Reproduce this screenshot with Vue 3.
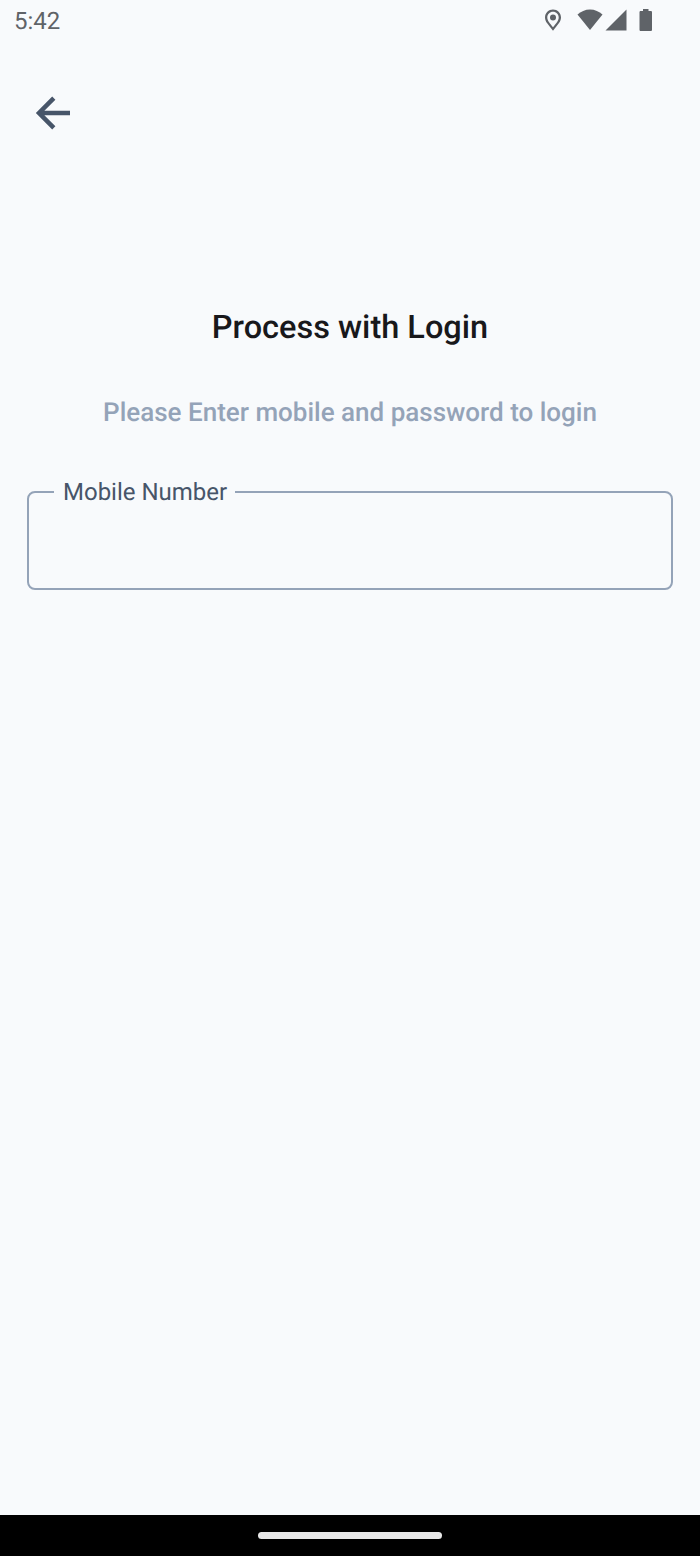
<template>
  <div class="screen">
    <div class="status-bar">
      <span class="time">5:42</span>
      <div class="status-icons">
        <svg class="ic-pin" width="18" height="22" viewBox="0 0 18 22">
          <path fill-rule="evenodd" d="M9 0.500C4.600 0.500 1 4 1 8.400c0 2.100 .9 4 2 5.700C4.600 16.500 7 19 9 21.800c2-2.800 4.400-5.300 6-7.700 1.100-1.700 2-3.600 2-5.700C17 4 13.400 0.500 9 0.500zm0 2.300c3.200 0 5.700 2.500 5.700 5.600 0 1.600-.7 3.100-1.600 4.500-1 1.600-2.800 3.500-4.100 5.300-1.300-1.800-3.100-3.700-4.100-5.300-.9-1.400-1.600-2.900-1.600-4.500C3.300 5.300 5.800 2.800 9 2.800z" />
          <circle cx="9" cy="8.500" r="3" />
        </svg>
        <svg class="ic-wifi" width="26" height="22" viewBox="0 0 26 22">
          <path d="M0.500 5.500C3.800 2.600 8.200 0.500 13 0.500s9.200 2.100 12.500 5L13 21z" />
        </svg>
        <svg class="ic-signal" width="22" height="22" viewBox="0 0 22 22">
          <path d="M21.500 0.500V21.500H0.500z" />
        </svg>
        <svg class="ic-battery" width="14" height="22" viewBox="0 0 14 22">
          <path d="M4 0h5.500v2h2.200c.8 0 1.300 .5 1.300 1.300v17.400c0 .8-.5 1.300-1.300 1.300H1.800c-.8 0-1.300-.5-1.300-1.300V3.300C0.500 2.500 1 2 1.800 2H4z" />
        </svg>
      </div>
    </div>

    <main class="content">
      <button class="back" type="button" aria-label="Back">
        <svg width="36" height="34" viewBox="0 0 36 34" fill="none">
          <path d="M35 17H5M18.800 2.200L4 17l14.800 14.800" stroke="#475569" stroke-width="4.500" />
        </svg>
      </button>

      <h1 class="title">Process with Login</h1>
      <p class="subtitle">Please Enter mobile and password to login</p>

      <div class="field">
        <label class="field-label" for="mobile">Mobile Number</label>
        <input id="mobile" class="field-input" type="tel" />
      </div>
    </main>

    <div class="nav-bar">
      <div class="nav-handle"></div>
    </div>
  </div>
</template>

<script setup>
</script>

<style scoped>
.screen {
  display: flex;
  flex-direction: column;
  width: 700px;
  height: 1556px;
  background: #f8fafc;
  font-family: Roboto, sans-serif;
  text-rendering: geometricPrecision;
}

.status-bar {
  display: flex;
  justify-content: space-between;
  height: 41px;
  box-sizing: border-box;
  padding: 9px 47px 0 14px;
  flex-shrink: 0;
}

.time {
  font-size: 24px;
  line-height: 24px;
  color: #5f6368;
}

.status-icons {
  display: flex;
}

.status-icons svg {
  display: block;
  fill: #5f6368;
}

.ic-wifi {
  margin-left: 15px;
}

.ic-signal {
  margin-left: 2px;
}

.ic-battery {
  margin-left: 12px;
}

.content {
  flex: 1;
  padding: 55px 27px 0;
}

.back {
  display: block;
  margin-left: 8px;
  padding: 0;
  border: 0;
  background: none;
  height: 34px;
}

.back svg {
  display: block;
}

.title {
  margin: 177px 0 0;
  font-size: 32.500px;
  line-height: 40px;
  font-weight: 500;
  text-align: center;
  color: #18181b;
}

.subtitle {
  margin: 46px 0 0;
  font-size: 26px;
  line-height: 40px;
  font-weight: 500;
  text-align: center;
  color: #94a3b8;
}

.field {
  position: relative;
  margin-top: 58px;
}

.field-label {
  position: absolute;
  top: -15px;
  left: 27px;
  padding: 0 8px 0 9px;
  background: #f8fafc;
  font-size: 24px;
  line-height: 32px;
  color: #475569;
}

.field-input {
  display: block;
  box-sizing: border-box;
  width: 100%;
  height: 99px;
  border: 2px solid #94a3b8;
  border-radius: 8px;
  background: transparent;
  outline: none;
}

.nav-bar {
  display: flex;
  justify-content: center;
  height: 41px;
  padding-top: 17px;
  box-sizing: border-box;
  background: #000;
  flex-shrink: 0;
}

.nav-handle {
  width: 184px;
  height: 7px;
  border-radius: 4px;
  background: #e8e8e8;
}
</style>

<style>
body {
  margin: 0;
}
</style>
